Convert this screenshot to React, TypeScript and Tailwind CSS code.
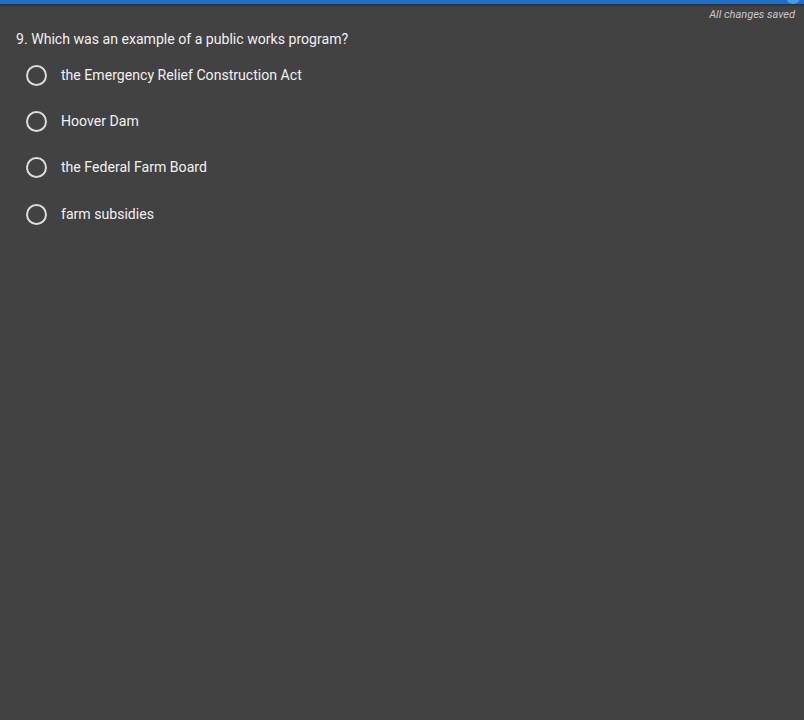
import React from "react";

const options = [
  "the Emergency Relief Construction Act",
  "Hoover Dam",
  "the Federal Farm Board",
  "farm subsidies",
];

export default function App() {
  return (
    <div
      className="w-[804px] h-[720px] bg-[#424242] overflow-hidden relative"
      style={{ fontFamily: "Roboto, 'Noto Sans', sans-serif" }}
    >
      <div className="h-[4px] bg-[#1e6fc8] relative">
        <div className="absolute right-[4px] top-[-10px] w-[14px] h-[14px] rounded-full bg-[#4a9ae8]" />
      </div>
      <div className="h-[2px] bg-[#353535]" />
      <div className="flex justify-end pr-[9px] pt-[1px] h-[17px]">
        <span className="italic text-[11px] leading-[16px] text-[#c8c8c8]">All changes saved</span>
      </div>
      <div className="pl-[16px] pt-[6px] text-[14.1px] leading-[20px] text-[#f0f0f0]">
        9. Which was an example of a public works program?
      </div>
      <div className="flex flex-col pt-[3px]">
        {options.map((o) => (
          <div key={o} className="flex items-center h-[46.4px] pl-[26px]">
            <div className="w-[21px] h-[21px] rounded-full border-[2px] border-[#dcdcdc] shrink-0" />
            <span className="ml-[14px] text-[14.1px] text-[#f0f0f0]">{o}</span>
          </div>
        ))}
      </div>
    </div>
  );
}
